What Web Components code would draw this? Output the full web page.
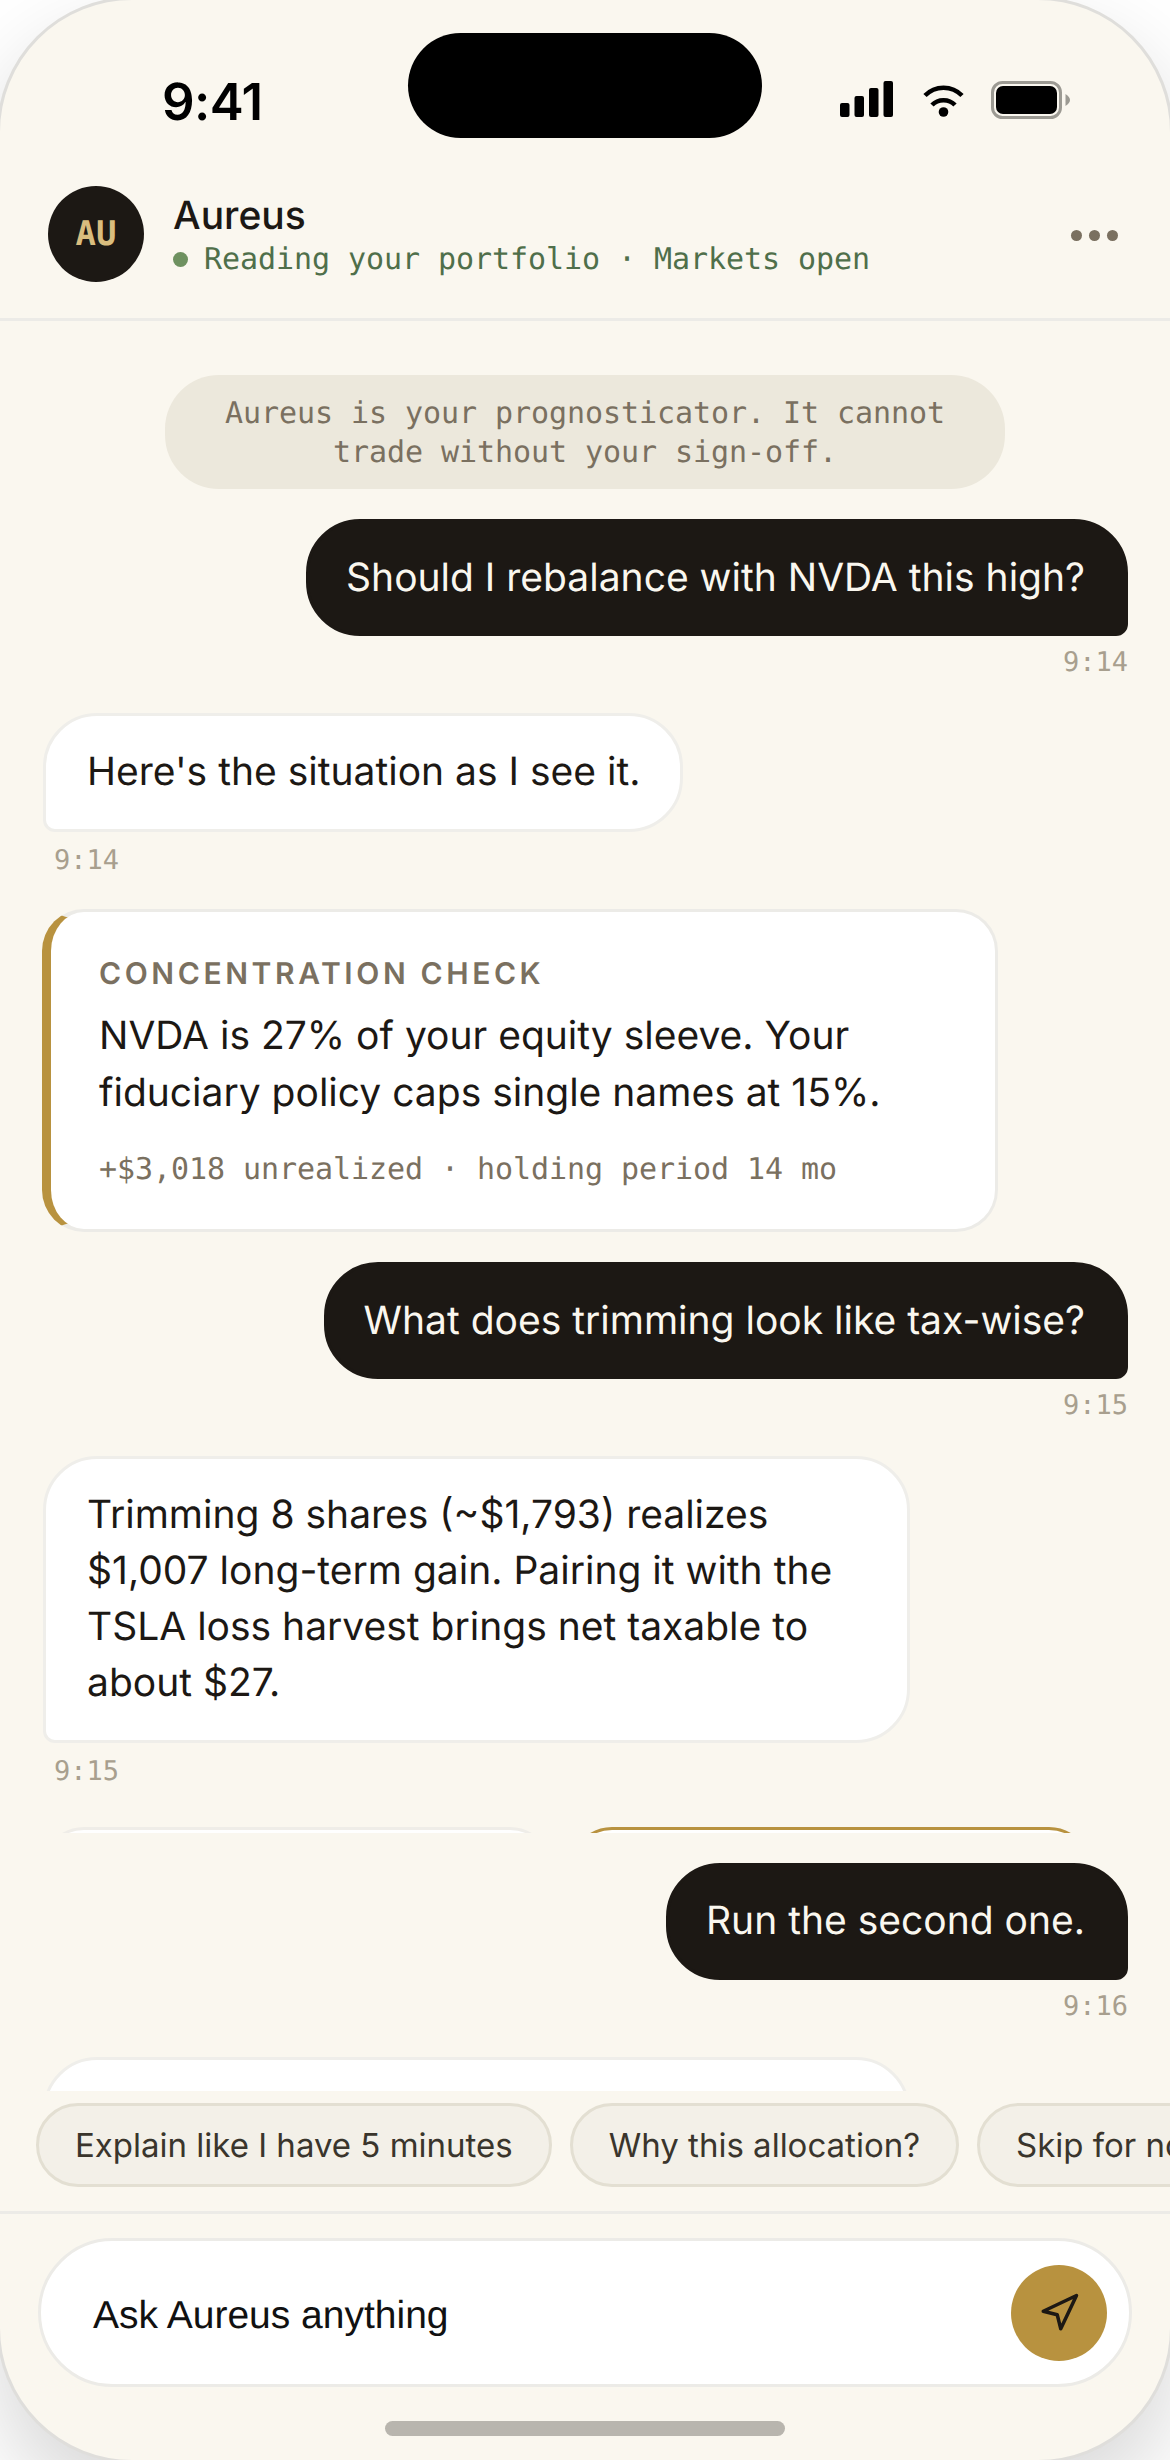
<!DOCTYPE html>
<html lang="en">
<head>
<meta charset="utf-8">
<title>Aureus</title>
<style>
  html, body { margin: 0; height: 2460px; overflow: hidden; background: #fff; }
  body {
    font-family: Inter, "Liberation Sans", sans-serif;
    color: #1c1814;
    text-rendering: geometricPrecision;
  }
</style>
</head>
<body>
<phone-frame>
  <status-bar></status-bar>
  <chat-header name="Aureus" initials="AU">Reading your portfolio · Markets open</chat-header>
  <chat-thread>
    <chat-note>Aureus is your prognosticator. It cannot trade without your sign-off.</chat-note>
    <chat-bubble role="user" time="9:14">Should I rebalance with NVDA this high?</chat-bubble>
    <chat-bubble role="bot" time="9:14">Here's the situation as I see it.</chat-bubble>
    <insight-card label="CONCENTRATION CHECK" meta="+$3,018 unrealized · holding period 14 mo">NVDA is 27% of your equity sleeve. Your fiduciary policy caps single names at 15%.</insight-card>
    <chat-bubble role="user" time="9:15">What does trimming look like tax-wise?</chat-bubble>
    <chat-bubble role="bot" time="9:15">Trimming 8 shares (~$1,793) realizes $1,007 long-term gain. Pairing it with the TSLA loss harvest brings net taxable to about $27.</chat-bubble>
    <option-strip></option-strip>
    <chat-bubble role="user" time="9:16">Run the second one.</chat-bubble>
    <chat-bubble role="bot" style="width:867px"></chat-bubble>
  </chat-thread>
  <quick-chips>
    <quick-chip>Explain like I have 5 minutes</quick-chip>
    <quick-chip>Why this allocation?</quick-chip>
    <quick-chip>Skip for now</quick-chip>
  </quick-chips>
  <chat-composer>Ask Aureus anything</chat-composer>
</phone-frame>

<script>
const MONO = '"DejaVu Sans Mono", "Liberation Mono", monospace';

class PhoneFrame extends HTMLElement {
  constructor() {
    super();
    this.attachShadow({ mode: 'open' });
    this.shadowRoot.innerHTML = `
      <style>
        :host {
          display: flex;
          flex-direction: column;
          box-sizing: border-box;
          width: 1176px;
          height: 2466px;
          margin: -3px;
          padding: 3px 0;
          background: #faf7ef;
          border: 3px solid #dfdedb;
          border-radius: 135px;
          overflow: hidden;
          box-shadow: 0 40px 90px rgba(0, 0, 0, .16);
        }
      </style>
      <slot></slot>
    `;
  }
}

class StatusBar extends HTMLElement {
  constructor() {
    super();
    this.attachShadow({ mode: 'open' });
    this.shadowRoot.innerHTML = `
      <style>
        :host {
          display: flex;
          align-items: center;
          justify-content: space-between;
          flex: none;
          box-sizing: border-box;
          height: 147px;
          padding: 50px 100px 0 162px;
          position: relative;
        }
        .time { font-size: 51px; font-weight: 600; letter-spacing: -.6px; color: #000; line-height: 1; margin-top: 2px; }
        .island {
          position: absolute;
          top: 30px;
          left: 408px;
          width: 354px;
          height: 105px;
          border-radius: 53px;
          background: #000;
        }
        .icons { display: flex; align-items: flex-start; margin-top: -3px; }
        svg { display: block; }
        .wifi { margin: 4px 27px 0 30px; }
      </style>
      <span class="time">9:41</span>
      <div class="island"></div>
      <div class="icons">
        <svg width="53" height="36" viewBox="0 0 53 36" fill="#000">
          <rect x="0" y="22" width="9.5" height="14" rx="2"/>
          <rect x="14.5" y="15" width="9.5" height="21" rx="2"/>
          <rect x="29" y="7" width="9.5" height="29" rx="2"/>
          <rect x="43.5" y="0" width="9.5" height="36" rx="2"/>
        </svg>
        <svg class="wifi" width="41" height="32" viewBox="0 0 41 32" fill="none" stroke="#000" stroke-width="4.5">
          <path d="M2 10.5C12 0 29 0 39 10.5"/>
          <path d="M9 20C15 13.5 26 13.5 32 20"/>
          <circle cx="20.5" cy="27" r="4.8" fill="#000" stroke="none"/>
        </svg>
        <svg width="79" height="38" viewBox="0 0 79 38">
          <rect x="1.5" y="1.5" width="68" height="35" rx="10" fill="none" stroke="#9c9a93" stroke-width="3"/>
          <rect x="5" y="5" width="61" height="28" rx="7" fill="#000"/>
          <path d="M74.5 13Q79 16 79 19Q79 22 74.5 25Z" fill="#9c9a93"/>
        </svg>
      </div>
    `;
  }
}

class ChatHeader extends HTMLElement {
  constructor() {
    super();
    this.attachShadow({ mode: 'open' });
    this.shadowRoot.innerHTML = `
      <style>
        :host {
          display: flex;
          align-items: center;
          flex: none;
          height: 171px;
          box-sizing: border-box;
          padding: 0 52px 0 48px;
          border-bottom: 3px solid #ecebe7;
        }
        .avatar {
          width: 96px;
          height: 96px;
          border-radius: 50%;
          background: #1c1814;
          color: #d9bd7e;
          font: 700 34px ${MONO};
          display: flex;
          align-items: center;
          justify-content: center;
          flex: none;
        }
        .info { margin-left: 29px; margin-top: 2px; flex: 1; }
        .name { font-size: 39px; font-weight: 500; line-height: 48px; }
        .status {
          display: flex;
          align-items: center;
          font: 30px/39px ${MONO};
          letter-spacing: -.06px;
          color: #4f6f4a;
        }
        .dot { width: 15px; height: 15px; border-radius: 50%; background: #6e9160; margin-right: 16px; }
        .more { display: flex; gap: 7px; margin-top: 2px; }
        .more i { width: 11px; height: 11px; border-radius: 50%; background: #7a7060; }
      </style>
      <div class="avatar">${this.getAttribute('initials')}</div>
      <div class="info">
        <div class="name">${this.getAttribute('name')}</div>
        <div class="status"><span class="dot"></span><span><slot></slot></span></div>
      </div>
      <div class="more"><i></i><i></i><i></i></div>
    `;
  }
}

class ChatThread extends HTMLElement {
  constructor() {
    super();
    this.attachShadow({ mode: 'open' });
    this.shadowRoot.innerHTML = `
      <style>
        :host {
          display: flex;
          flex-direction: column;
          gap: 30px;
          flex: none;
          height: 1770px;
          box-sizing: border-box;
          padding: 54px 42px 0;
          overflow: hidden;
        }
        ::slotted(*) { flex: none; }
      </style>
      <slot></slot>
    `;
  }
}

class ChatNote extends HTMLElement {
  constructor() {
    super();
    this.attachShadow({ mode: 'open' });
    this.shadowRoot.innerHTML = `
      <style>
        :host {
          display: block;
          box-sizing: border-box;
          width: 840px;
          align-self: center;
          padding: 19px 54px 17px;
          border-radius: 54px;
          background: #ece8dc;
          color: #7a7060;
          font: 30px/39px ${MONO};
          letter-spacing: -.06px;
          text-align: center;
        }
      </style>
      <slot></slot>
    `;
  }
}

class ChatBubble extends HTMLElement {
  constructor() {
    super();
    this.attachShadow({ mode: 'open' });
    const time = this.getAttribute('time');
    this.shadowRoot.innerHTML = `
      <style>
        :host { display: flex; flex-direction: column; align-items: flex-start; align-self: flex-start; margin-left: 1px; }
        :host([role="user"]) { align-items: flex-end; align-self: flex-end; margin-left: 0; }
        .b {
          box-sizing: border-box;
          max-width: 867px;
          padding: 28px 40px 28.4px 41px;
          border: 3px solid #efeeea;
          border-radius: 54px 54px 54px 12px;
          background: #fff;
          font-size: 39px;
          line-height: 56px;
          color: #1c1814;
          min-height: 118px;
          width: 100%;
        }
        :host([role="user"]) .b {
          background: #1c1814;
          border-color: #1c1814;
          color: #faf7ef;
          padding: 27.7px 40px 27.7px 37px;
          border-radius: 54px 54px 12px 54px;
          min-height: 117px;
        }
        .t {
          margin-top: 10px;
          padding: 0 11px;
          font: 27px/37px ${MONO};
          color: #a89f8e;
        }
        :host([role="user"]) .t { padding: 0; margin-top: 6px; line-height: 41px; }
      </style>
      <div class="b"><slot></slot></div>
      ${time ? `<div class="t">${time}</div>` : ''}
    `;
  }
}

class InsightCard extends HTMLElement {
  constructor() {
    super();
    this.attachShadow({ mode: 'open' });
    this.shadowRoot.innerHTML = `
      <style>
        :host {
          display: block;
          box-sizing: border-box;
          width: 956px;
          padding: 41.5px 48px 39.5px 48px;
          background: #fff;
          border: 3px solid #ecebe7;
          border-left: 9px solid #b8923f;
          border-radius: 42px;
        }
        .label {
          font-size: 30px;
          line-height: 42px;
          font-weight: 600;
          letter-spacing: 3.6px;
          color: #7a7060;
        }
        .body { margin-top: 13px; font-size: 39px; line-height: 56.55px; color: #1c1814; }
        .meta {
          margin-top: 29px;
          font: 30px/39px ${MONO};
          letter-spacing: -.06px;
          color: #7a7060;
        }
      </style>
      <div class="label">${this.getAttribute('label')}</div>
      <div class="body"><slot></slot></div>
      <div class="meta">${this.getAttribute('meta')}</div>
    `;
  }
}

class OptionStrip extends HTMLElement {
  constructor() {
    super();
    this.attachShadow({ mode: 'open' });
    this.shadowRoot.innerHTML = `
      <style>
        :host {
          display: flex;
          gap: 18px;
          height: 6px;
          margin-top: 7px;
          overflow: hidden;
        }
        div {
          box-sizing: border-box;
          flex: none;
          height: 200px;
          background: #fff;
          border: 3px solid #efede8;
          border-radius: 42px;
        }
        .a { width: 510px; }
        .b { width: 521px; border-color: #b8923f; }
      </style>
      <div class="a"></div>
      <div class="b"></div>
    `;
  }
}

class QuickChips extends HTMLElement {
  constructor() {
    super();
    this.attachShadow({ mode: 'open' });
    this.shadowRoot.innerHTML = `
      <style>
        :host {
          display: flex;
          gap: 18px;
          flex: none;
          box-sizing: border-box;
          height: 123px;
          padding: 12px 0 24px 36px;
          border-bottom: 3px solid #ecebe7;
          overflow: hidden;
        }
      </style>
      <slot></slot>
    `;
  }
}

class QuickChip extends HTMLElement {
  constructor() {
    super();
    this.attachShadow({ mode: 'open' });
    this.shadowRoot.innerHTML = `
      <style>
        :host {
          display: flex;
          align-items: center;
          flex: none;
          box-sizing: border-box;
          height: 84px;
          padding: 0 36px;
          border: 3px solid #e3dfd2;
          border-radius: 42px;
          background: #f3f0e8;
          color: #3a352c;
          font-size: 33px;
          white-space: nowrap;
        }
      </style>
      <slot></slot>
    `;
  }
}

class ChatComposer extends HTMLElement {
  constructor() {
    super();
    this.attachShadow({ mode: 'open' });
    this.shadowRoot.innerHTML = `
      <style>
        :host {
          display: flex;
          flex-direction: column;
          align-items: center;
          flex: 1;
          padding: 24px 38px 0;
        }
        .field {
          display: flex;
          align-items: center;
          justify-content: space-between;
          box-sizing: border-box;
          width: 100%;
          height: 149px;
          padding: 0 22px 0 52px;
          border: 3px solid #ecebe7;
          border-radius: 75px;
          background: #fff;
          font-family: "Liberation Sans", sans-serif;
          font-size: 39px;
          color: #111;
        }
        .field span { padding-top: 7px; }
        .send {
          width: 96px;
          height: 96px;
          border-radius: 50%;
          background: #b8923f;
          display: flex;
          align-items: center;
          justify-content: center;
          flex: none;
        }
        .home { width: 400px; height: 15px; margin-top: 34px; border-radius: 8px; background: #b8b5ae; }
      </style>
      <div class="field">
        <span><slot></slot></span>
        <div class="send">
          <svg width="42" height="42" viewBox="0 0 24 24" fill="none" stroke="#1c1814" stroke-width="2" stroke-linecap="round" stroke-linejoin="round">
            <polygon points="3 11 22 2 13 21 11 13 3 11"/>
          </svg>
        </div>
      </div>
      <div class="home"></div>
    `;
  }
}

customElements.define('phone-frame', PhoneFrame);
customElements.define('status-bar', StatusBar);
customElements.define('chat-header', ChatHeader);
customElements.define('chat-thread', ChatThread);
customElements.define('chat-note', ChatNote);
customElements.define('chat-bubble', ChatBubble);
customElements.define('insight-card', InsightCard);
customElements.define('option-strip', OptionStrip);
customElements.define('quick-chips', QuickChips);
customElements.define('quick-chip', QuickChip);
customElements.define('chat-composer', ChatComposer);
</script>
</body>
</html>
